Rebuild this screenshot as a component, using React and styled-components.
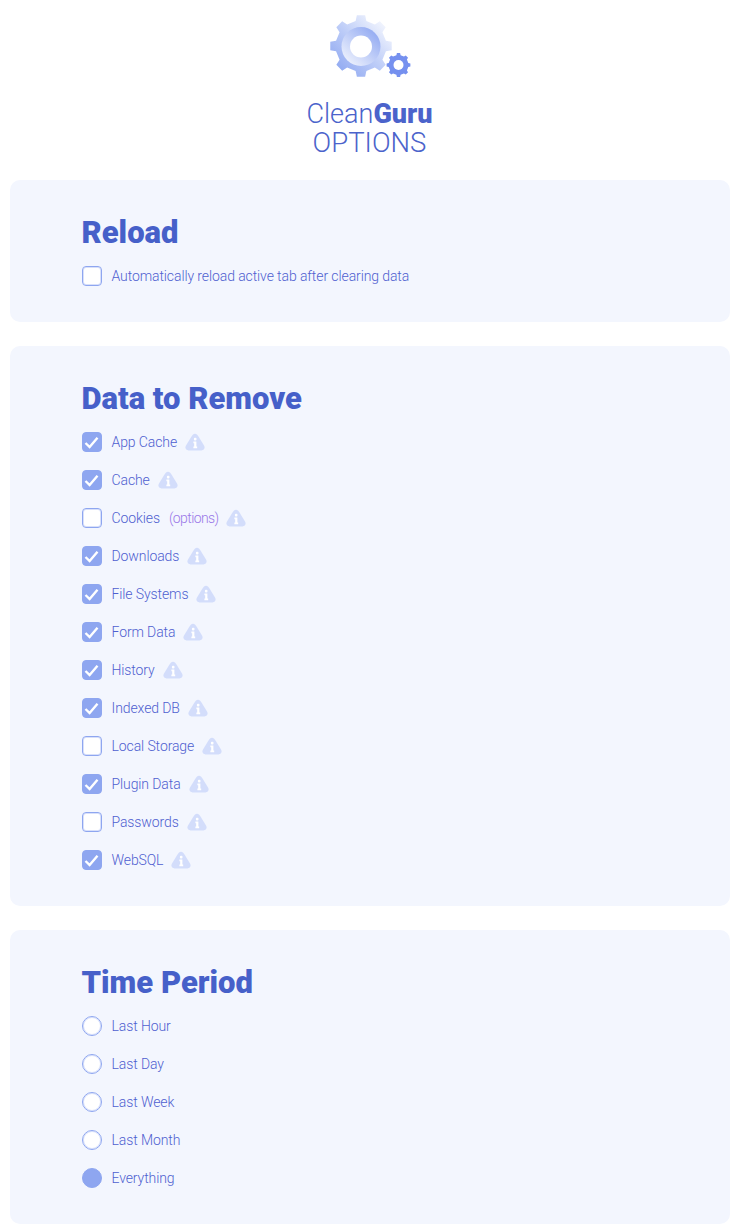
import React from "react";
import styled, { createGlobalStyle } from "styled-components";

const Global = createGlobalStyle`
  html, body { margin: 0; padding: 0; background: #fff; }
  body { font-family: "Roboto", "Liberation Sans", sans-serif; }
`;

const Page = styled.div`
  display: flex;
  flex-direction: column;
  align-items: center;
  width: 739px;
  padding: 0 0 4px;
  box-sizing: border-box;
`;
const Header = styled.header`
  display: flex;
  flex-direction: column;
  align-items: center;
  padding-top: 12px;
  height: 180px;
  box-sizing: border-box;
  width: 720px;
  color: #4b63cb;
`;
const Brand = styled.div`
  margin-top: 20px;
  font-size: 27px;
  line-height: 28px;
  font-weight: 300;
  b { font-weight: 900; }
`;
const Sub = styled.div`
  margin-top: 1px;
  font-size: 27.5px;
  line-height: 28px;
  font-weight: 300;
`;
const Card = styled.section`
  width: 720px;
  box-sizing: border-box;
  background: #f3f6fe;
  border-radius: 10px;
  padding: 34px 72px 27px;
  margin-top: ${p => p.$first ? "0" : "24px"};
`;
const Title = styled.h2`
  margin: 0 0 5px;
  font-size: 31px;
  line-height: 38px;
  font-weight: 900;
  color: #4660c9;
`;
const Row = styled.div`
  display: flex;
  align-items: center;
  height: 38px;
  font-size: 14px;
  font-weight: 300;
  letter-spacing: -0.1px;
  color: #4f5fd0;
`;
const Box = styled.span`
  flex: none;
  width: 20px;
  height: 20px;
  box-sizing: border-box;
  display: flex;
  align-items: center;
  justify-content: center;
  border-radius: ${p => p.$round ? "50%" : "4px"};
  border: 1px solid #8ea6f0;
  box-shadow: inset 0 0 0 1px ${p => p.$on ? "#8ea6f0" : "rgba(142, 166, 240, 0.35)"};
  background: ${p => p.$on ? "#8ea6f0" : "#fff"};
  margin-right: 10px;
`;
const Options = styled.span`
  color: #9a78e8;
  margin-left: 9px;
  letter-spacing: -0.6px;
`;
const Info = styled.svg`
  flex: none;
  margin-left: 8px;
  width: 20px;
  height: 18px;
`;
const LogoSvg = styled.svg`
  width: 84px;
  height: 68px;
  flex: none;
`;

function gear(cx, cy, ro, ri, teeth) {
  const pts = [];
  const step = (Math.PI * 2) / teeth;
  const p = (r, t) => `${(cx + r * Math.cos(t)).toFixed(2)} ${(cy + r * Math.sin(t)).toFixed(2)}`;
  for (let i = 0; i < teeth; i++) {
    const a = i * step - Math.PI / 2;
    pts.push(p(ri, a - step * 0.27), p(ro, a - step * 0.17), p(ro, a + step * 0.17), p(ri, a + step * 0.27));
  }
  return "M" + pts.join("L") + "Z";
}

const Logo = () => (
  <LogoSvg viewBox="0 0 84 68">
    <defs>
      <linearGradient id="g1" x1="0.1" y1="0.9" x2="0.9" y2="0.1">
        <stop offset="0" stopColor="#8fa8f1" />
        <stop offset="0.5" stopColor="#bfcef8" />
        <stop offset="1" stopColor="#f6f8fe" />
      </linearGradient>
      <linearGradient id="g3" x1="0.1" y1="0.9" x2="0.8" y2="0.15">
        <stop offset="0" stopColor="#eef2fd" />
        <stop offset="1" stopColor="#9ab0f3" />
      </linearGradient>
    </defs>
    <path d={gear(33, 34, 31, 25.5, 8)} fill="url(#g1)" />
    <circle cx="33" cy="34.5" r="19.5" fill="url(#g3)" />
    <circle cx="33" cy="34.5" r="11" fill="#fff" />
    <path d={gear(70.5, 53, 12, 10, 8)} fill="#7590ef" />
    <circle cx="70.5" cy="53" r="5" fill="#fff" />
  </LogoSvg>
);

const Check = () => (
  <svg width="15" height="13" viewBox="0 0 15 13" fill="none">
    <path d="M1.5 7L5.6 11L13.5 1.8" stroke="#fff" strokeWidth="2.4" />
  </svg>
);

const InfoIcon = () => (
  <Info viewBox="0 0 20 18">
    <path d="M10 .8C8.4 .8 7.6 1.8 6.8 3.1L1 12.6C-.4 15 .8 17.4 3.6 17.4H16.4C19.2 17.4 20.4 15 19 12.6L13.2 3.1C12.4 1.8 11.6 .8 10 .8Z" fill="#d3ddfb" />
    <rect x="8.9" y="4.8" width="2.6" height="2.6" rx="1" fill="#fff" />
    <path d="M8.4 8.6H11.4V13.6H12.2V15.2H8.4V13.6H9.2V10.2H8.4Z" fill="#fff" />
  </Info>
);

const data = [
  ["App Cache", 1], ["Cache", 1], ["Cookies", 0, true], ["Downloads", 1], ["File Systems", 1], ["Form Data", 1],
  ["History", 1], ["Indexed DB", 1], ["Local Storage", 0], ["Plugin Data", 1], ["Passwords", 0], ["WebSQL", 1],
];
const periods = ["Last Hour", "Last Day", "Last Week", "Last Month", "Everything"];

export default function App() {
  return (
    <Page>
      <Global />
      <Header>
        <Logo />
        <Brand>Clean<b>Guru</b></Brand>
        <Sub>OPTIONS</Sub>
      </Header>
      <Card $first>
        <Title>Reload</Title>
        <Row><Box />Automatically reload active tab after clearing data</Row>
      </Card>
      <Card>
        <Title>Data to Remove</Title>
        {data.map(([l, on, opt]) => (
          <Row key={l}>
            <Box $on={!!on}>{on ? <Check /> : null}</Box>
            {l}
            {opt && <Options>(options)</Options>}
            <InfoIcon />
          </Row>
        ))}
      </Card>
      <Card>
        <Title>Time Period</Title>
        {periods.map((l, i) => (
          <Row key={l}><Box $round $on={i === 4} />{l}</Row>
        ))}
      </Card>
    </Page>
  );
}
